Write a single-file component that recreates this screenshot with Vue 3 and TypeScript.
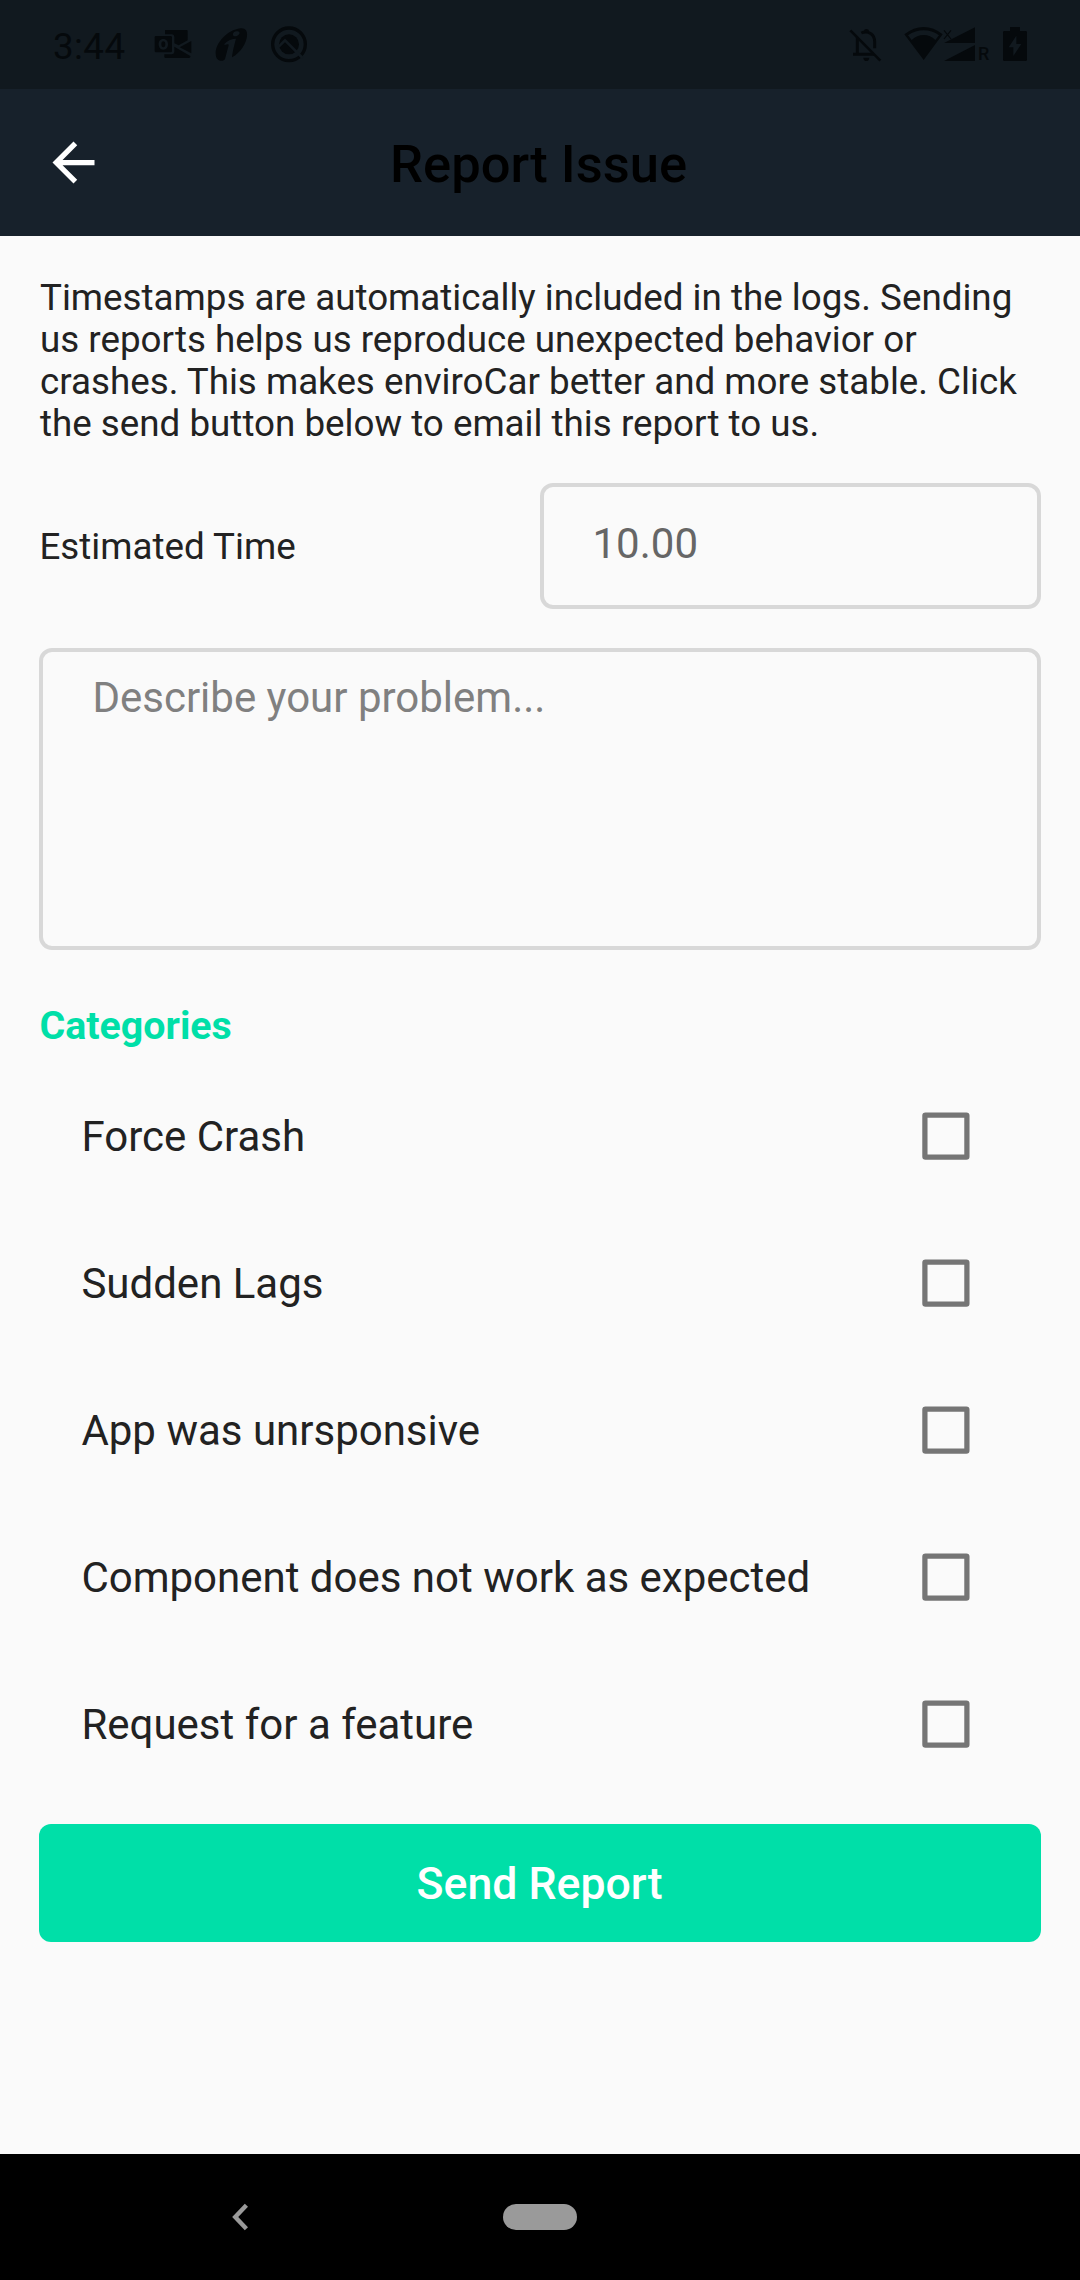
<script setup lang="ts">
import { ref } from 'vue'

interface Category {
  label: string
  checked: boolean
}

const estimatedTime = ref('10.00')
const description = ref('')
const categories = ref<Category[]>([
  { label: 'Force Crash', checked: false },
  { label: 'Sudden Lags', checked: false },
  { label: 'App was unrsponsive', checked: false },
  { label: 'Component does not work as expected', checked: false },
  { label: 'Request for a feature', checked: false },
])
</script>

<template>
  <div class="screen">
    <header class="status-bar">
      <div class="status-left">
        <span class="clock">3:44</span>
        <svg class="ic-mail" width="39" height="36" viewBox="372 78 117 108">
          <path d="M405 90H470Q473 90 473 93V121L446 136L433 130V112Q433 103 425 103H405Z" />
          <path fill-rule="evenodd" d="M378 108H422Q426 108 426 112V153Q426 157 422 157H378Q374 157 374 153V112Q374 108 378 108ZM400 117C390 117 386 124 386 133C386 142 391 149 400 149C409 149 414 142 414 133C414 124 409 117 400 117ZM400 124C404 124 406 128 406 133C406 138 404 142 400 142C396 142 394 138 394 133C394 128 396 124 400 124Z" />
          <path d="M449 142L484 123V160Z" />
          <path d="M433 140L481 168V171Q480 174 476 174H407Q403 174 403 170V163H425Q433 163 433 154Z" />
        </svg>
        <svg class="ic-info" width="33" height="36" viewBox="555 78 99 108">
          <path fill-rule="evenodd" d="M632 85C646 84 653 93 651 108C649 130 632 158 606 172C607 159 611 142 618 116C607 116 592 121 583 132L584 135C591 132 597 131 596 136L585 177C583 182 577 183 570 182C561 180 557 173 557 160C557 130 590 90 632 85ZM620 94C613 94 608 99 609 104C610 109 616 110 622 107C628 104 630 100 628 97C627 95 624 94 620 94Z" />
        </svg>
        <svg class="ic-q" width="38" height="38" viewBox="720 75 114 114">
          <circle cx="777" cy="133" r="49" fill="none" stroke="currentColor" stroke-width="10" />
          <circle cx="777" cy="133" r="30" />
          <path d="M746 140L765 121L818 174" fill="none" stroke="#11191f" stroke-width="8" />
        </svg>
      </div>
      <div class="status-right">
        <svg class="ic-bell" width="33" height="35" viewBox="87 81 99 105">
          <path d="M112 111V159M99 163H162M124 99Q139 92 153 101Q164 109 164 125V145" fill="none" stroke="currentColor" stroke-width="9" />
          <path d="M132 97V93Q132 87 139 87Q147 87 147 93V99Z" />
          <path d="M130 173H148Q147 183 139 183Q131 183 130 173Z" />
          <path d="M91 91L181 182" fill="none" stroke="currentColor" stroke-width="8" />
        </svg>
        <svg class="ic-wifi" width="39" height="35" viewBox="252 78 117 105">
          <path fill-rule="evenodd" d="M253 103Q281 81 311 81Q341 81 368 103L311 180ZM264 106L275 120Q291 105 311 105Q331 105 346 120L357 106Q336 91 311 91Q286 91 264 106Z" />
        </svg>
        <svg class="ic-signal" width="32" height="36" viewBox="369 78 96 108">
          <path d="M372 129L465 82V129ZM372 183L465 135V183Z" />
          <path d="M372 91L393 117M393 91L372 117" fill="none" stroke="currentColor" stroke-width="3.5" />
        </svg>
        <span class="roaming">R</span>
        <svg class="ic-battery" width="26" height="36" viewBox="546 78 78 108">
          <path fill-rule="evenodd" d="M570 81H600V93H617Q621 93 621 97V179Q621 183 617 183H553Q549 183 549 179V97Q549 93 553 93H570ZM589 107L566 142H580V168L604 132H589Z" />
        </svg>
      </div>
    </header>

    <div class="app-bar">
      <button class="back" type="button" aria-label="Back">
        <svg width="63" height="63" viewBox="0 0 24 24">
          <path d="M20 11H7.83l5.59-5.59L12 4l-8 8 8 8 1.41-1.41L7.83 13H20z" />
        </svg>
      </button>
      <h1 class="title">Report Issue</h1>
    </div>

    <main class="content">
      <p class="intro">
        Timestamps are automatically included in the logs. Sending us reports helps us reproduce unexpected behavior or crashes. This makes enviroCar better and more stable. Click the send button below to email this report to us.
      </p>

      <div class="time-row">
        <label class="time-label" for="time">Estimated Time</label>
        <input id="time" v-model="estimatedTime" class="time-input" type="text" />
      </div>

      <textarea v-model="description" class="description" placeholder="Describe your problem..."></textarea>

      <h2 class="section">Categories</h2>
      <ul class="categories">
        <li v-for="c in categories" :key="c.label" class="category" @click="c.checked = !c.checked">
          <span>{{ c.label }}</span>
          <svg class="check" width="48" height="48" viewBox="0 0 48 48">
            <rect x="2.9" y="3" width="42" height="42" rx="0.6" />
            <path v-if="c.checked" d="M11 24l9 9 17-18" />
          </svg>
        </li>
      </ul>

      <button class="send" type="button">Send Report</button>
    </main>

    <nav class="nav-bar">
      <svg class="nav-back" width="20" height="30" viewBox="0 0 20 30">
        <path d="M15.4 3.2L4.2 15l11.2 11.8" />
      </svg>
      <span class="nav-home"></span>
    </nav>
  </div>
</template>

<style>
body {
  background: #fafafa;
}
</style>

<style scoped>
.screen {
  width: 1080px;
  height: 2280px;
  display: flex;
  flex-direction: column;
  overflow: hidden;
  background: #fafafa;
  color: #222;
  font-family: Roboto, sans-serif;
}

.status-bar {
  flex: none;
  height: 89px;
  display: flex;
  justify-content: space-between;
  background: #11191f;
  color: #05090c;
}

.status-bar svg {
  display: block;
  fill: currentColor;
}

.status-left,
.status-right {
  display: flex;
  align-items: flex-start;
}

.status-left {
  padding-left: 53px;
}

.status-right {
  padding-right: 52px;
}

.clock {
  width: 101px;
  margin-top: 25px;
  font-size: 36.75px;
  line-height: 43px;
  letter-spacing: 0.4px;
}

.ic-mail {
  margin-top: 26px;
}

.ic-info {
  margin: 26px 0 0 22px;
}

.ic-q {
  margin: 25px 0 0 22px;
}

.ic-bell {
  margin: 27px 22px 0 0;
}

.ic-wifi,
.ic-signal,
.ic-battery {
  margin-top: 26px;
}

.roaming {
  width: 27px;
  padding-left: 3px;
  box-sizing: border-box;
  margin-top: 43px;
  font-size: 18px;
  font-weight: 500;
  line-height: 22px;
}

.app-bar {
  flex: none;
  height: 147px;
  display: grid;
  grid-template-columns: 147px 1fr 147px;
  background: #17212b;
}

.back {
  display: flex;
  align-items: center;
  padding: 0 0 0 42px;
  border: 0;
  background: none;
}

.back svg {
  fill: #fff;
}

.title {
  margin: 44px 0 0;
  padding-right: 3px;
  color: #000;
  font-size: 52.5px;
  font-weight: 500;
  line-height: 62px;
  text-align: center;
}

.content {
  flex: 1;
  display: flex;
  flex-direction: column;
  padding: 41px 39px 0;
}

.intro {
  margin: 0 0 38px;
  padding-left: 1px;
  font-size: 36.75px;
  line-height: 42px;
}

.time-row {
  display: flex;
  align-items: center;
  height: 126px;
  margin-bottom: 39px;
}

.time-label {
  flex: 1;
  padding: 0 0 0 0.4px;
  font-size: 36.75px;
  line-height: 43px;
}

.time-input,
.description {
  box-sizing: border-box;
  margin: 0;
  border: 4px solid #d8d8d8;
  border-radius: 13px;
  outline: 0;
  background: transparent;
  font-family: inherit;
  font-size: 42px;
  line-height: 49px;
}

.time-input {
  width: 501px;
  height: 126px;
  padding: 0 48px 5px 48.5px;
  color: #666;
}

.description {
  display: block;
  width: 1002px;
  height: 302px;
  padding: 21px 48px 21px 49.4px;
  color: #212121;
  resize: none;
}

.description::placeholder {
  color: #808080;
  opacity: 1;
}

.section {
  margin: 52px 0 14px;
  padding-left: 0.4px;
  color: #00dfa8;
  font-size: 39.375px;
  font-weight: 700;
  line-height: 47px;
}

.categories {
  margin: 0 0 26px;
  padding: 0;
  list-style: none;
}

.category {
  display: flex;
  align-items: center;
  justify-content: space-between;
  height: 147px;
  padding: 0 71px 0 42.4px;
  font-size: 42px;
  line-height: 49px;
}

.check {
  display: block;
  margin-bottom: 1px;
  fill: none;
  stroke: #757575;
  stroke-width: 5.25;
}

.send {
  height: 118px;
  padding: 2px 1px 0 0;
  border: 0;
  border-radius: 12px;
  background: #00dfa8;
  color: #fff;
  font-family: inherit;
  font-size: 44.625px;
  font-weight: 500;
  line-height: 52px;
}

.nav-bar {
  flex: none;
  height: 126px;
  display: grid;
  grid-template-columns: 231px 1fr 74px 1fr 231px;
  align-items: center;
  background: #000;
}

.nav-back {
  grid-column: 2;
  fill: none;
  stroke: #9a9a9a;
  stroke-width: 4.4;
}

.nav-home {
  grid-column: 3;
  height: 26.5px;
  border-radius: 14px;
  background: #9a9a9a;
}
</style>
